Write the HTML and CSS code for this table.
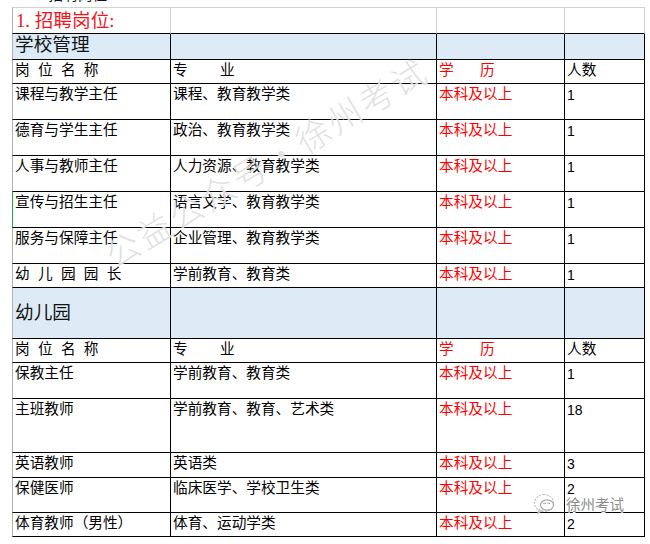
FILE: index.html
```html
<!DOCTYPE html>
<html lang="zh-CN">
<head>
<meta charset="utf-8">
<title>招聘岗位</title>
<link rel="stylesheet" href="styles.css">
</head>
<body>
<div class="page">
  <div class="cut"><span class="cut-text">1. 招聘岗位</span></div>
  <table class="sheet">
    <tr class="r-title">
      <td class="c1 first title"><span class="title-text">1. 招聘岗位:</span></td>
      <td class="c2 gray"></td>
      <td class="c3 gray"></td>
      <td class="c4 gray"></td>
    </tr>
    <tr class="r26 band">
      <td class="first section">学校管理</td>
      <td></td><td></td><td></td>
    </tr>
    <tr class="r24">
      <td class="first spaced">岗位名称</td>
      <td class="zy">专　　业</td>
      <td class="red xl">学　　历</td>
      <td>人数</td>
    </tr>
    <tr class="r36">
      <td class="first">课程与教学主任</td>
      <td>课程、教育教学类</td>
      <td class="red">本科及以上</td>
      <td class="num">1</td>
    </tr>
    <tr class="r36">
      <td class="first">德育与学生主任</td>
      <td>政治、教育教学类</td>
      <td class="red">本科及以上</td>
      <td class="num">1</td>
    </tr>
    <tr class="r36">
      <td class="first">人事与教师主任</td>
      <td>人力资源、教育教学类</td>
      <td class="red">本科及以上</td>
      <td class="num">1</td>
    </tr>
    <tr class="r36">
      <td class="first green">宣传与招生主任</td>
      <td>语言文学、教育教学类</td>
      <td class="red">本科及以上</td>
      <td class="num">1</td>
    </tr>
    <tr class="r36">
      <td class="first">服务与保障主任</td>
      <td>企业管理、教育教学类</td>
      <td class="red">本科及以上</td>
      <td class="num">1</td>
    </tr>
    <tr class="r24">
      <td class="first spaced">幼儿园园长</td>
      <td>学前教育、教育类</td>
      <td class="red">本科及以上</td>
      <td class="num">1</td>
    </tr>
    <tr class="r51 band">
      <td class="first section low">幼儿园</td>
      <td></td><td></td><td></td>
    </tr>
    <tr class="r24">
      <td class="first spaced">岗位名称</td>
      <td class="zy">专　　业</td>
      <td class="red xl">学　　历</td>
      <td>人数</td>
    </tr>
    <tr class="r36">
      <td class="first">保教主任</td>
      <td>学前教育、教育类</td>
      <td class="red">本科及以上</td>
      <td class="num">1</td>
    </tr>
    <tr class="r54">
      <td class="first">主班教师</td>
      <td>学前教育、教育、艺术类</td>
      <td class="red">本科及以上</td>
      <td class="num">18</td>
    </tr>
    <tr class="r25">
      <td class="first">英语教师</td>
      <td>英语类</td>
      <td class="red">本科及以上</td>
      <td class="num">3</td>
    </tr>
    <tr class="r35">
      <td class="first">保健医师</td>
      <td>临床医学、学校卫生类</td>
      <td class="red">本科及以上</td>
      <td class="num">2</td>
    </tr>
    <tr class="r24">
      <td class="first">体育教师（男性）</td>
      <td>体育、运动学类</td>
      <td class="red">本科及以上</td>
      <td class="num">2</td>
    </tr>
  </table>

  <div class="watermark">公益公众号・徐州考试</div>

  <div class="logo">
    <svg class="logo-icon" width="26" height="24" viewBox="0 0 26 24">
      <path d="M12 2.5a9.5 8.5 0 1 0 0.1 0z" fill="none" stroke="#c4c4c4" stroke-width="1.2" stroke-dasharray="2 1.2"/>
      <path d="M8 16.5 L6 21 L11 18" fill="none" stroke="#c4c4c4" stroke-width="1.2"/>
      <ellipse cx="15" cy="13" rx="6.5" ry="5.2" fill="#fff" stroke="#a8a8a8" stroke-width="1.2"/>
      <path d="M11.5 12 l1.2 -1.2 l1.2 1.2 M15.5 12 l1.2 -1.2 l1.2 1.2" fill="none" stroke="#9a9a9a" stroke-width="1"/>
    </svg>
    <span class="logo-text">徐州考试</span>
  </div>
</div>
</body>
</html>
```

FILE: styles.css
```css
html, body {
  margin: 0;
  padding: 0;
  background: #fff;
}

.page {
  position: relative;
  width: 650px;
  height: 544px;
  overflow: hidden;
  font-family: "Noto Sans CJK SC", sans-serif;
  font-size: 14.67px;
  color: #000;
}

.cut {
  height: 7px;
  overflow: hidden;
  padding-left: 33px;
}

.cut-text {
  display: block;
  margin-top: -15px;
  line-height: 17px;
  font-size: 14.67px;
  color: #111;
}

.sheet {
  margin-left: 12px;
  width: 633px;
  table-layout: fixed;
  border-collapse: separate;
  border-spacing: 0;
}

.sheet td {
  box-sizing: border-box;
  border-right: 1px solid #000;
  border-bottom: 1px solid #000;
  padding: 0 0 0 2px;
  vertical-align: top;
  line-height: 17px;
  white-space: nowrap;
}

.sheet td.first {
  border-left: 1px solid #b0b0b0;
}

.sheet td.green {
  border-left-color: #2aa640;
}

.c1 { width: 159px; }
.c2 { width: 266px; }
.c3 { width: 128px; }
.c4 { width: 80px; }

.r-title { height: 27px; }
.r24 { height: 24px; }
.r25 { height: 25px; }
.r26 { height: 26px; }
.r35 { height: 35px; }
.r36 { height: 36px; }
.r51 { height: 51px; }
.r54 { height: 54px; }

.r-title td {
  border-top: 1px solid #d2d2d2;
}

.sheet td.gray,
.sheet td.title {
  border-right-color: #d2d2d2;
}

.title-text {
  display: block;
  font-family: "Liberation Serif", "Noto Sans CJK SC", serif;
  font-size: 18.67px;
  line-height: 25px;
  color: #f3141c;
  padding-left: 1px;
}

.band td {
  background: #ddebf7;
}

.section {
  font-size: 18.67px;
  line-height: 23px;
  color: #141414;
}

.section.low {
  padding-top: 14px;
}

.spaced {
  letter-spacing: 8.3px;
}

.zy {
  letter-spacing: 1px;
}

.xl {
  letter-spacing: -1px;
}

.red {
  color: #ff0000;
}

.num {
  font-family: "Liberation Sans", sans-serif;
  font-size: 14px;
  padding-top: 3px !important;
}

.watermark {
  position: absolute;
  left: 266px;
  top: 162px;
  transform: translate(-50%, -50%) rotate(-31deg);
  white-space: nowrap;
  font-family: "Noto Sans CJK SC", sans-serif;
  font-size: 34px;
  font-weight: 300;
  letter-spacing: 3px;
  line-height: 40px;
  color: rgba(205, 205, 205, 0.6);
  text-shadow: 0 0 1px #fff;
}

.logo {
  position: absolute;
  left: 532px;
  top: 492px;
  display: flex;
  align-items: center;
  gap: 8px;
}

.logo-icon {
  display: block;
}

.logo-text {
  font-size: 14.5px;
  line-height: 20px;
  color: #8c8c8c;
  text-shadow: 1px 0 0 #fff, -1px 0 0 #fff, 0 1px 0 #fff, 0 -1px 0 #fff;
}
```
